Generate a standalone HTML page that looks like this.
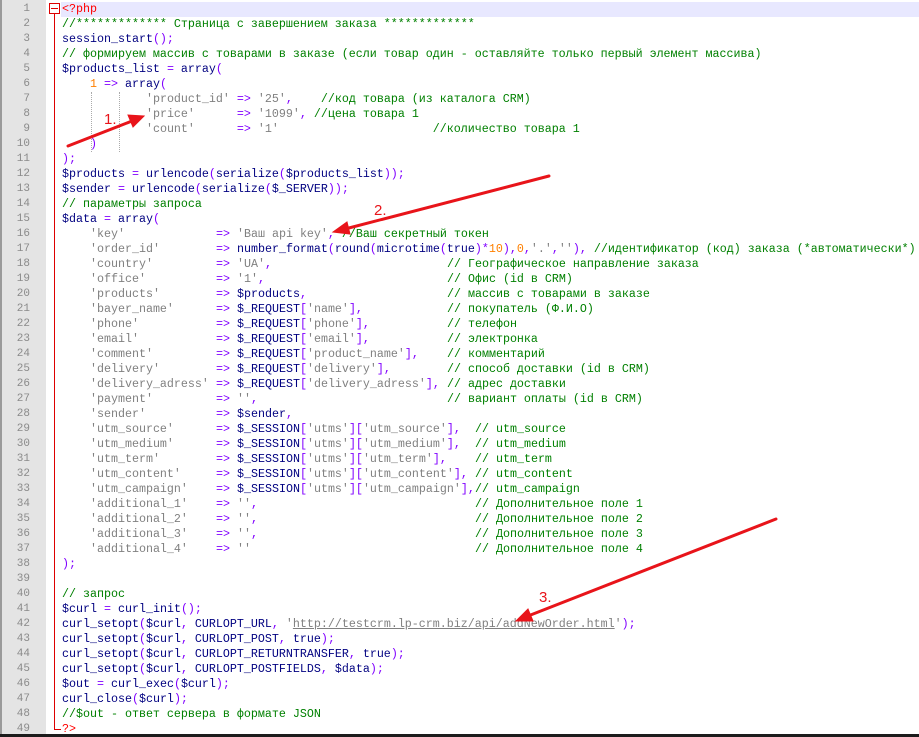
<!DOCTYPE html>
<html><head><meta charset="utf-8"><style>
body{margin:0;width:919px;height:737px;overflow:hidden;background:#fff;position:relative;font-family:"Liberation Mono",monospace;}
#g{position:absolute;left:0;top:0;width:46px;height:737px;background:#e4e4e4;border-left:2px solid #9a9a9a;box-sizing:border-box}
.ln{position:absolute;left:0;width:30px;text-align:right;color:#8a8a8a;font-size:11px;font-family:"Liberation Mono",monospace;height:15px;line-height:15px}
.l{position:absolute;left:62px;height:15px;line-height:15px;font-size:11.67px;white-space:pre;color:#000080}
.v{color:#000080}.o{color:#8000ff}.s{color:#808080}.c{color:#008000}.n{color:#ff8000}.r{color:#ff0000}
.k{display:inline-block;width:126px}.w1{display:inline-block;width:210px}.w2{display:inline-block;width:238px}
#bot{position:absolute;left:0;top:734px;width:919px;height:3px;background:#1c1c1c}
</style></head><body>
<div id="g"></div>
<div style="position:absolute;left:61px;top:2px;width:858px;height:15px;background:#e8e8ff"></div>
<div style="position:absolute;left:49px;top:3px;width:9px;height:9px;border:1px solid #d00;background:#fff"></div>
<div style="position:absolute;left:51px;top:8px;width:7px;height:1px;background:#d00"></div>
<div style="position:absolute;left:54px;top:14px;width:1px;height:715px;background:#d00"></div>
<div style="position:absolute;left:54px;top:729px;width:7px;height:1px;background:#d00"></div>
<div style="position:absolute;left:91px;top:92px;height:60px;border-left:1px dotted #aaa"></div>
<div style="position:absolute;left:119px;top:92px;height:60px;border-left:1px dotted #aaa"></div>
<div id="nums"></div>
<div class="l" style="top:2px"><span class="r">&lt;?php</span></div>
<div class="l" style="top:17px"><span class="c">//************* Страница с завершением заказа *************</span></div>
<div class="l" style="top:32px">session_start<span class="o">();</span></div>
<div class="l" style="top:47px"><span class="c">// формируем массив с товарами в заказе (если товар один - оставляйте только первый элемент массива)</span></div>
<div class="l" style="top:62px">$products_list <span class="o">=</span> array<span class="o">(</span></div>
<div class="l" style="top:77px">    <span class="n">1</span> <span class="o">=&gt;</span> array<span class="o">(</span></div>
<div class="l" style="top:92px">            <span class="s">'product_id'</span> <span class="o">=&gt;</span> <span class="s">'25'</span><span class="o">,</span>    <span class="c">//код товара (из каталога CRM)</span></div>
<div class="l" style="top:107px">            <span class="s">'price'</span>      <span class="o">=&gt;</span> <span class="s">'1099'</span><span class="o">,</span> <span class="c">//цена товара 1</span></div>
<div class="l" style="top:122px">            <span class="s">'count'</span>      <span class="o">=&gt;</span> <span class="s">'1'</span>                      <span class="c">//количество товара 1</span></div>
<div class="l" style="top:137px">    <span class="o">)</span></div>
<div class="l" style="top:152px"><span class="o">);</span></div>
<div class="l" style="top:167px">$products <span class="o">=</span> urlencode<span class="o">(</span>serialize<span class="o">(</span>$products_list<span class="o">));</span></div>
<div class="l" style="top:182px">$sender <span class="o">=</span> urlencode<span class="o">(</span>serialize<span class="o">(</span>$_SERVER<span class="o">));</span></div>
<div class="l" style="top:197px"><span class="c">// параметры запроса</span></div>
<div class="l" style="top:212px">$data <span class="o">=</span> array<span class="o">(</span></div>
<div class="l" style="top:227px">    <span class="k s">'key'</span><span class="o">=&gt;</span> <span class="s">'Ваш api key'</span><span class="o">,</span> <span class="c">//Ваш секретный токен</span></div>
<div class="l" style="top:242px">    <span class="k s">'order_id'</span><span class="o">=&gt;</span> number_format<span class="o">(</span>round<span class="o">(</span>microtime<span class="o">(</span>true<span class="o">)*</span><span class="n">10</span><span class="o">),</span><span class="n">0</span><span class="o">,</span><span class="s">'.'</span><span class="o">,</span><span class="s">''</span><span class="o">),</span> <span class="c">//идентификатор (код) заказа (*автоматически*)</span></div>
<div class="l" style="top:257px">    <span class="k s">'country'</span><span class="o">=&gt;</span> <span class="w1"><span class="s">'UA'</span><span class="o">,</span></span><span class="c">// Географическое направление заказа</span></div>
<div class="l" style="top:272px">    <span class="k s">'office'</span><span class="o">=&gt;</span> <span class="w1"><span class="s">'1'</span><span class="o">,</span></span><span class="c">// Офис (id в CRM)</span></div>
<div class="l" style="top:287px">    <span class="k s">'products'</span><span class="o">=&gt;</span> <span class="w1">$products<span class="o">,</span></span><span class="c">// массив с товарами в заказе</span></div>
<div class="l" style="top:302px">    <span class="k s">'bayer_name'</span><span class="o">=&gt;</span> <span class="w1">$_REQUEST<span class="o">[</span><span class="s">'name'</span><span class="o">],</span></span><span class="c">// покупатель (Ф.И.О)</span></div>
<div class="l" style="top:317px">    <span class="k s">'phone'</span><span class="o">=&gt;</span> <span class="w1">$_REQUEST<span class="o">[</span><span class="s">'phone'</span><span class="o">],</span></span><span class="c">// телефон</span></div>
<div class="l" style="top:332px">    <span class="k s">'email'</span><span class="o">=&gt;</span> <span class="w1">$_REQUEST<span class="o">[</span><span class="s">'email'</span><span class="o">],</span></span><span class="c">// электронка</span></div>
<div class="l" style="top:347px">    <span class="k s">'comment'</span><span class="o">=&gt;</span> <span class="w1">$_REQUEST<span class="o">[</span><span class="s">'product_name'</span><span class="o">],</span></span><span class="c">// комментарий</span></div>
<div class="l" style="top:362px">    <span class="k s">'delivery'</span><span class="o">=&gt;</span> <span class="w1">$_REQUEST<span class="o">[</span><span class="s">'delivery'</span><span class="o">],</span></span><span class="c">// способ доставки (id в CRM)</span></div>
<div class="l" style="top:377px">    <span class="k s">'delivery_adress'</span><span class="o">=&gt;</span> <span class="w1">$_REQUEST<span class="o">[</span><span class="s">'delivery_adress'</span><span class="o">],</span></span><span class="c">// адрес доставки</span></div>
<div class="l" style="top:392px">    <span class="k s">'payment'</span><span class="o">=&gt;</span> <span class="w1"><span class="s">''</span><span class="o">,</span></span><span class="c">// вариант оплаты (id в CRM)</span></div>
<div class="l" style="top:407px">    <span class="k s">'sender'</span><span class="o">=&gt;</span> $sender<span class="o">,</span></div>
<div class="l" style="top:422px">    <span class="k s">'utm_source'</span><span class="o">=&gt;</span> <span class="w2">$_SESSION<span class="o">[</span><span class="s">'utms'</span><span class="o">][</span><span class="s">'utm_source'</span><span class="o">],</span></span><span class="c">// utm_source</span></div>
<div class="l" style="top:437px">    <span class="k s">'utm_medium'</span><span class="o">=&gt;</span> <span class="w2">$_SESSION<span class="o">[</span><span class="s">'utms'</span><span class="o">][</span><span class="s">'utm_medium'</span><span class="o">],</span></span><span class="c">// utm_medium</span></div>
<div class="l" style="top:452px">    <span class="k s">'utm_term'</span><span class="o">=&gt;</span> <span class="w2">$_SESSION<span class="o">[</span><span class="s">'utms'</span><span class="o">][</span><span class="s">'utm_term'</span><span class="o">],</span></span><span class="c">// utm_term</span></div>
<div class="l" style="top:467px">    <span class="k s">'utm_content'</span><span class="o">=&gt;</span> <span class="w2">$_SESSION<span class="o">[</span><span class="s">'utms'</span><span class="o">][</span><span class="s">'utm_content'</span><span class="o">],</span></span><span class="c">// utm_content</span></div>
<div class="l" style="top:482px">    <span class="k s">'utm_campaign'</span><span class="o">=&gt;</span> <span class="w2">$_SESSION<span class="o">[</span><span class="s">'utms'</span><span class="o">][</span><span class="s">'utm_campaign'</span><span class="o">],</span></span><span class="c">// utm_campaign</span></div>
<div class="l" style="top:497px">    <span class="k s">'additional_1'</span><span class="o">=&gt;</span> <span class="w2"><span class="s">''</span><span class="o">,</span></span><span class="c">// Дополнительное поле 1</span></div>
<div class="l" style="top:512px">    <span class="k s">'additional_2'</span><span class="o">=&gt;</span> <span class="w2"><span class="s">''</span><span class="o">,</span></span><span class="c">// Дополнительное поле 2</span></div>
<div class="l" style="top:527px">    <span class="k s">'additional_3'</span><span class="o">=&gt;</span> <span class="w2"><span class="s">''</span><span class="o">,</span></span><span class="c">// Дополнительное поле 3</span></div>
<div class="l" style="top:542px">    <span class="k s">'additional_4'</span><span class="o">=&gt;</span> <span class="w2"><span class="s">''</span></span><span class="c">// Дополнительное поле 4</span></div>
<div class="l" style="top:557px"><span class="o">);</span></div>
<div class="l" style="top:587px"><span class="c">// запрос</span></div>
<div class="l" style="top:602px">$curl <span class="o">=</span> curl_init<span class="o">();</span></div>
<div class="l" style="top:617px">curl_setopt<span class="o">(</span>$curl<span class="o">,</span> CURLOPT_URL<span class="o">,</span> <span class="s">'<u>http://testcrm.lp-crm.biz/api/addNewOrder.html</u>'</span><span class="o">);</span></div>
<div class="l" style="top:632px">curl_setopt<span class="o">(</span>$curl<span class="o">,</span> CURLOPT_POST<span class="o">,</span> true<span class="o">);</span></div>
<div class="l" style="top:647px">curl_setopt<span class="o">(</span>$curl<span class="o">,</span> CURLOPT_RETURNTRANSFER<span class="o">,</span> true<span class="o">);</span></div>
<div class="l" style="top:662px">curl_setopt<span class="o">(</span>$curl<span class="o">,</span> CURLOPT_POSTFIELDS<span class="o">,</span> $data<span class="o">);</span></div>
<div class="l" style="top:677px">$out <span class="o">=</span> curl_exec<span class="o">(</span>$curl<span class="o">);</span></div>
<div class="l" style="top:692px">curl_close<span class="o">(</span>$curl<span class="o">);</span></div>
<div class="l" style="top:707px"><span class="c">//$out - ответ сервера в формате JSON</span></div>
<div class="l" style="top:722px"><span class="r">?&gt;</span></div>
<div class="ln" style="top:2px">1</div><div class="ln" style="top:17px">2</div><div class="ln" style="top:32px">3</div><div class="ln" style="top:47px">4</div><div class="ln" style="top:62px">5</div><div class="ln" style="top:77px">6</div><div class="ln" style="top:92px">7</div><div class="ln" style="top:107px">8</div><div class="ln" style="top:122px">9</div><div class="ln" style="top:137px">10</div><div class="ln" style="top:152px">11</div><div class="ln" style="top:167px">12</div><div class="ln" style="top:182px">13</div><div class="ln" style="top:197px">14</div><div class="ln" style="top:212px">15</div><div class="ln" style="top:227px">16</div><div class="ln" style="top:242px">17</div><div class="ln" style="top:257px">18</div><div class="ln" style="top:272px">19</div><div class="ln" style="top:287px">20</div><div class="ln" style="top:302px">21</div><div class="ln" style="top:317px">22</div><div class="ln" style="top:332px">23</div><div class="ln" style="top:347px">24</div><div class="ln" style="top:362px">25</div><div class="ln" style="top:377px">26</div><div class="ln" style="top:392px">27</div><div class="ln" style="top:407px">28</div><div class="ln" style="top:422px">29</div><div class="ln" style="top:437px">30</div><div class="ln" style="top:452px">31</div><div class="ln" style="top:467px">32</div><div class="ln" style="top:482px">33</div><div class="ln" style="top:497px">34</div><div class="ln" style="top:512px">35</div><div class="ln" style="top:527px">36</div><div class="ln" style="top:542px">37</div><div class="ln" style="top:557px">38</div><div class="ln" style="top:572px">39</div><div class="ln" style="top:587px">40</div><div class="ln" style="top:602px">41</div><div class="ln" style="top:617px">42</div><div class="ln" style="top:632px">43</div><div class="ln" style="top:647px">44</div><div class="ln" style="top:662px">45</div><div class="ln" style="top:677px">46</div><div class="ln" style="top:692px">47</div><div class="ln" style="top:707px">48</div><div class="ln" style="top:722px">49</div>
<svg style="position:absolute;left:0;top:0" width="919" height="737">
<g stroke="#e8141a" stroke-width="3" stroke-linecap="round" fill="#e8141a">
<line x1="68" y1="146" x2="132" y2="121"/><polygon points="144,116 128,115 133,127" stroke-width="1"/>
<line x1="549" y1="176" x2="345" y2="229"/><polygon points="333,232 347,222 350,234" stroke-width="1"/>
<line x1="776" y1="519" x2="528" y2="616"/><polygon points="516,621 528,609 533,621" stroke-width="1"/>
</g>
<g fill="#e8141a" font-family="Liberation Sans, sans-serif" font-size="15">
<text x="104" y="124">1.</text><text x="374" y="215">2.</text><text x="539" y="602">3.</text>
</g>
</svg>
<div id="bot"></div>
</body></html>
